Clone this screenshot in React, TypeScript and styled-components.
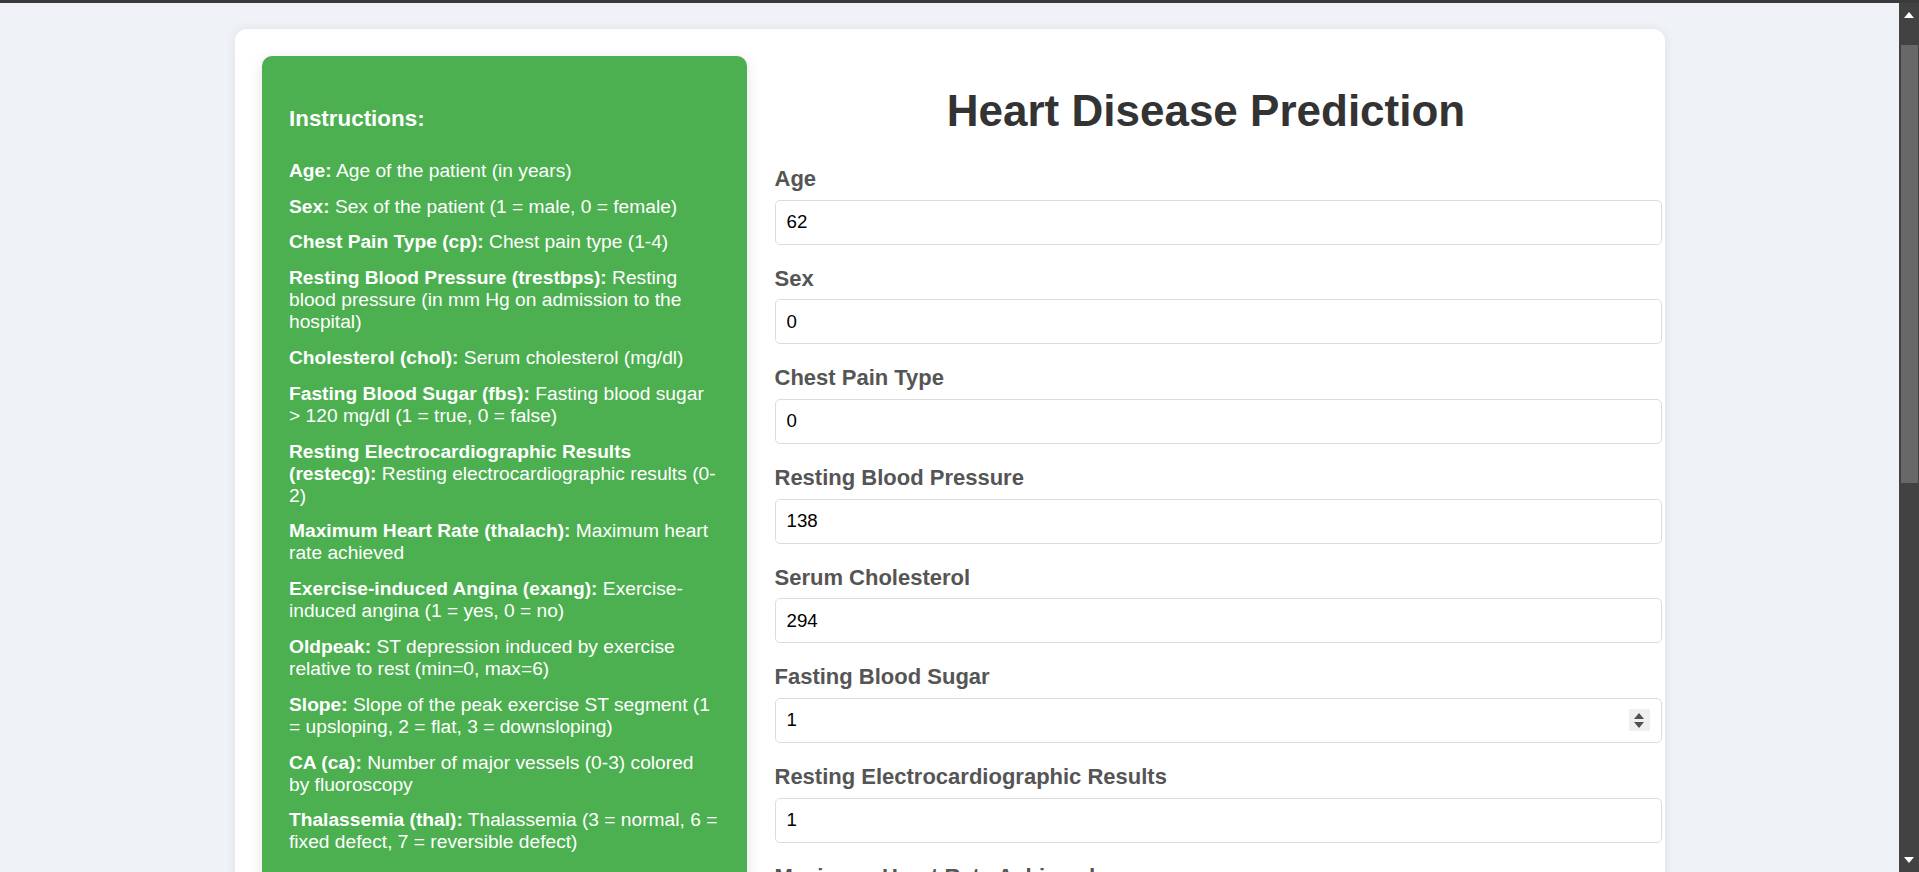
import React from "react";
import styled, { createGlobalStyle } from "styled-components";

const GlobalStyle = createGlobalStyle`
  html, body {
    margin: 0;
    padding: 0;
    height: 100%;
    overflow: hidden;
  }
  body {
    font-family: "Liberation Sans", Arial, sans-serif;
  }
  * { box-sizing: border-box; }
`;

const Screen = styled.div`
  height: 100vh;
  display: grid;
  grid-template-rows: 3px 1fr;
`;

const TopStrip = styled.div`
  background: #3b3b3b;
`;

const Viewport = styled.div`
  display: flex;
  min-height: 0;
`;

const Page = styled.main`
  flex: 1;
  min-width: 0;
  overflow: hidden;
  background: #eff2f7;
  padding-top: 26px;
`;

const Card = styled.div`
  width: 1430px;
  margin: 0 auto;
  display: flex;
  align-items: stretch;
  gap: 28px;
  padding: 27px;
  background: #ffffff;
  border-radius: 12px;
  box-shadow: 0 0 12px rgba(0, 0, 0, 0.08);
`;

const Sidebar = styled.aside`
  flex: 0 0 485px;
  background: #4caf50;
  color: #ffffff;
  border-radius: 10px;
  padding: 27px 27.5px;
  box-shadow: 0 4px 14px rgba(0, 0, 0, 0.12);
`;

const SidebarTitle = styled.h3`
  font-size: 22.4px;
  font-weight: 700;
  margin: 22.6px 0 28.2px;
`;

const Note = styled.p`
  font-size: 19.2px;
  line-height: 22px;
  margin: 0 0 13.8px;
`;

const FormColumn = styled.section`
  flex: 1;
  min-width: 0;
`;

const Title = styled.h1`
  font-size: 44px;
  font-weight: 700;
  color: #333333;
  text-align: center;
  margin: 29.5px 0 30.5px;
`;

const Field = styled.div`
  margin-bottom: 21.2px;
`;

const Label = styled.label`
  display: block;
  font-size: 22px;
  font-weight: 700;
  color: #555555;
  margin-bottom: 7.5px;
`;

const InputWrap = styled.div`
  position: relative;
`;

const Input = styled.input`
  box-sizing: content-box;
  display: block;
  width: 100%;
  height: 21px;
  padding: 11px;
  border: 1px solid #dcdcdc;
  border-radius: 5px;
  font-family: "Liberation Sans", Arial, sans-serif;
  font-size: 18.7px;
  color: #000000;
  background: #ffffff;
  outline: none;
  -moz-appearance: textfield;

  &::-webkit-inner-spin-button,
  &::-webkit-outer-spin-button {
    -webkit-appearance: none;
    margin: 0;
  }
`;

const Spinner = styled.div`
  position: absolute;
  right: -12px;
  top: 50%;
  transform: translateY(-50%);
  width: 21px;
  height: 22px;
  background: #efefef;
  display: flex;
  flex-direction: column;
  align-items: center;
  justify-content: center;
  gap: 3px;
`;

const ScrollTrack = styled.div`
  flex: 0 0 20px;
  background: #424242;
  display: flex;
  flex-direction: column;
  align-items: stretch;
`;

const ArrowButton = styled.div`
  height: 24px;
  display: flex;
  align-items: center;
  justify-content: center;
`;

const ThumbGap = styled.div`
  height: 18px;
`;

const Thumb = styled.div`
  height: 438px;
  margin: 0 1px 0 2px;
  background: #686868;
`;

const TrackRest = styled.div`
  flex: 1;
`;

const Arrow = ({ down, color = "#ffffff" }: { down?: boolean; color?: string }) => (
  <svg width="10" height="6" viewBox="0 0 10 6">
    {down ? <polygon points="0,0 10,0 5,6" fill={color} /> : <polygon points="5,0 10,6 0,6" fill={color} />}
  </svg>
);

const notes: [string, string][] = [
  ["Age:", "Age of the patient (in years)"],
  ["Sex:", "Sex of the patient (1 = male, 0 = female)"],
  ["Chest Pain Type (cp):", "Chest pain type (1-4)"],
  ["Resting Blood Pressure (trestbps):", "Resting blood pressure (in mm Hg on admission to the hospital)"],
  ["Cholesterol (chol):", "Serum cholesterol (mg/dl)"],
  ["Fasting Blood Sugar (fbs):", "Fasting blood sugar > 120 mg/dl (1 = true, 0 = false)"],
  ["Resting Electrocardiographic Results (restecg):", "Resting electrocardiographic results (0-2)"],
  ["Maximum Heart Rate (thalach):", "Maximum heart rate achieved"],
  ["Exercise-induced Angina (exang):", "Exercise-induced angina (1 = yes, 0 = no)"],
  ["Oldpeak:", "ST depression induced by exercise relative to rest (min=0, max=6)"],
  ["Slope:", "Slope of the peak exercise ST segment (1 = upsloping, 2 = flat, 3 = downsloping)"],
  ["CA (ca):", "Number of major vessels (0-3) colored by fluoroscopy"],
  ["Thalassemia (thal):", "Thalassemia (3 = normal, 6 = fixed defect, 7 = reversible defect)"],
];

const fields: { id: string; label: string; value: string; type?: string }[] = [
  { id: "age", label: "Age", value: "62" },
  { id: "sex", label: "Sex", value: "0" },
  { id: "cp", label: "Chest Pain Type", value: "0" },
  { id: "trestbps", label: "Resting Blood Pressure", value: "138" },
  { id: "chol", label: "Serum Cholesterol", value: "294" },
  { id: "fbs", label: "Fasting Blood Sugar", value: "1", type: "number" },
  { id: "restecg", label: "Resting Electrocardiographic Results", value: "1" },
  { id: "thalach", label: "Maximum Heart Rate Achieved", value: "106" },
  { id: "exang", label: "Exercise Induced Angina", value: "0" },
  { id: "oldpeak", label: "ST Depression Induced by Exercise", value: "1.9" },
  { id: "slope", label: "Slope of the Peak Exercise ST Segment", value: "1" },
  { id: "ca", label: "Number of Major Vessels", value: "3" },
  { id: "thal", label: "Thalassemia", value: "2" },
];

export default function App() {
  return (
    <>
      <GlobalStyle />
      <Screen>
        <TopStrip />
        <Viewport>
          <Page>
            <Card>
              <Sidebar>
                <SidebarTitle>Instructions:</SidebarTitle>
                {notes.map(([k, v]) => (
                  <Note key={k}>
                    <strong>{k}</strong> {v}
                  </Note>
                ))}
              </Sidebar>
              <FormColumn>
                <Title>Heart Disease Prediction</Title>
                {fields.map((f) => (
                  <Field key={f.id}>
                    <Label htmlFor={f.id}>{f.label}</Label>
                    <InputWrap>
                      <Input id={f.id} type={f.type ?? "text"} defaultValue={f.value} />
                      {f.type === "number" && (
                        <Spinner>
                          <Arrow color="#505050" />
                          <Arrow down color="#505050" />
                        </Spinner>
                      )}
                    </InputWrap>
                  </Field>
                ))}
              </FormColumn>
            </Card>
          </Page>
          <ScrollTrack>
            <ArrowButton>
              <Arrow />
            </ArrowButton>
            <ThumbGap />
            <Thumb />
            <TrackRest />
            <ArrowButton>
              <Arrow down />
            </ArrowButton>
          </ScrollTrack>
        </Viewport>
      </Screen>
    </>
  );
}
